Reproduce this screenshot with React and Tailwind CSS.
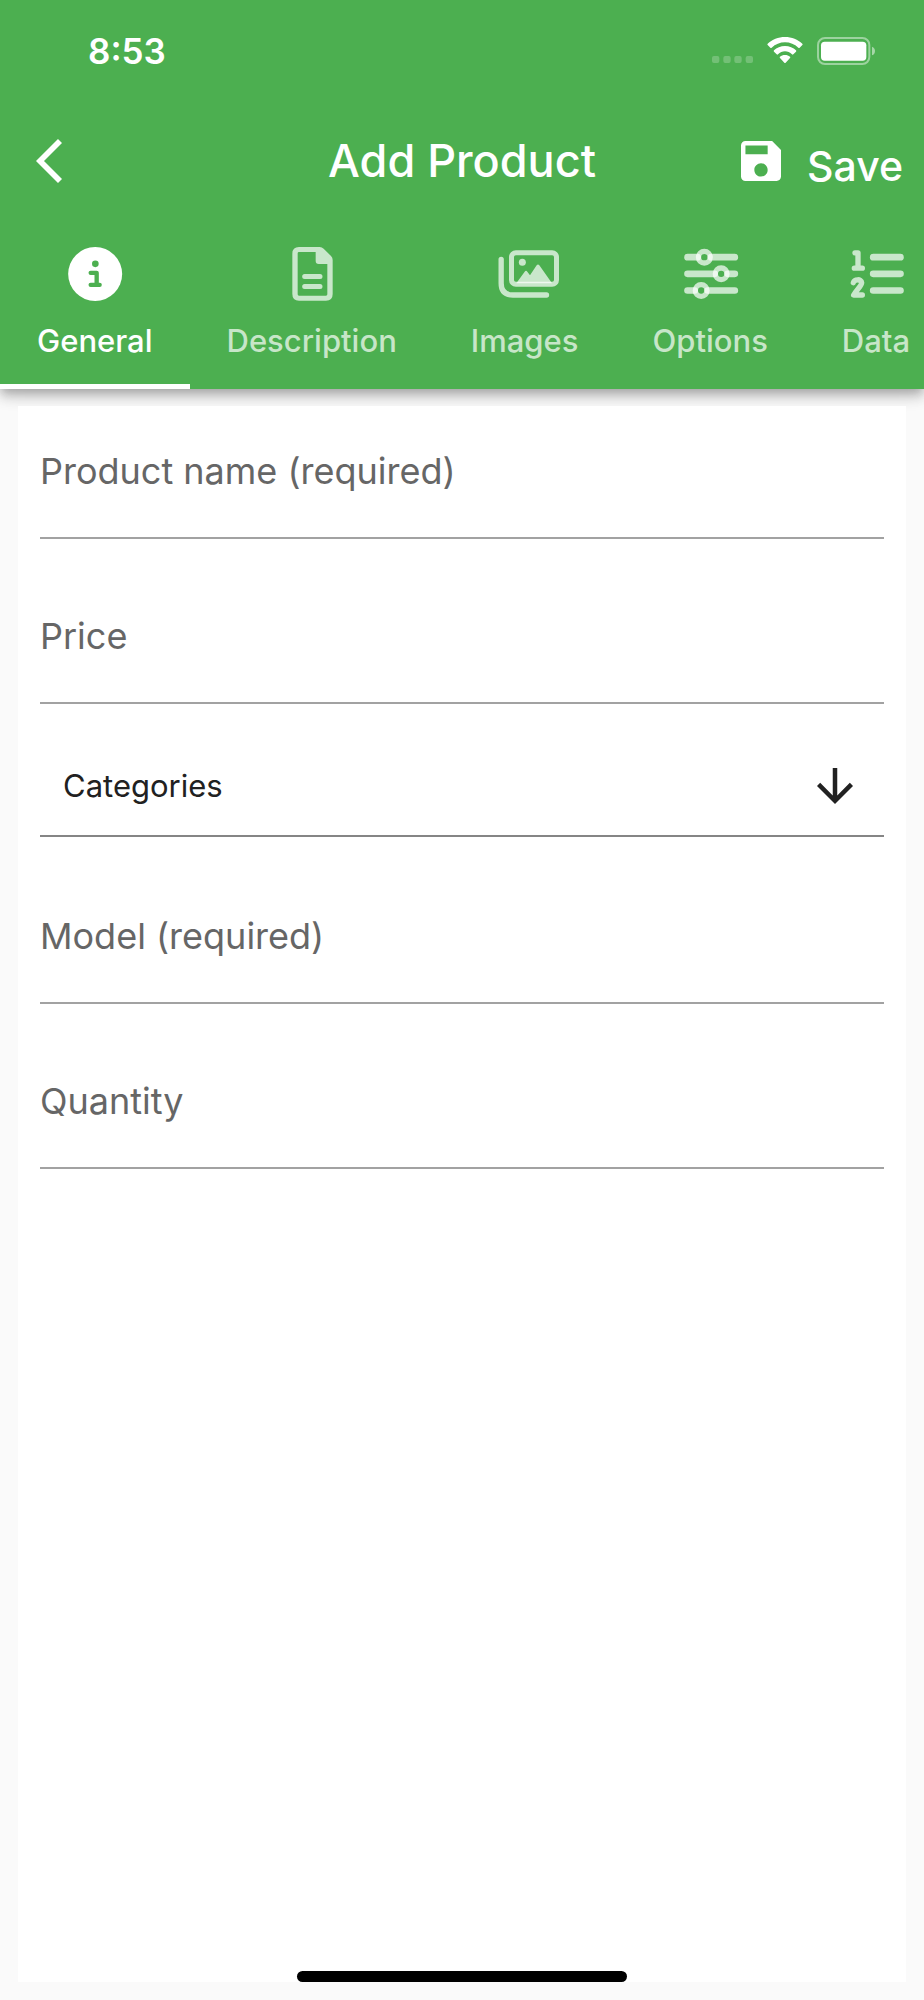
import { useState } from "react";

function BackIcon() {
  return (
    <svg viewBox="0 0 78 132" className="h-11 w-[26px]" fill="none" aria-hidden="true">
      <path d="M72 6 12 66l60 60" stroke="currentColor" strokeWidth="17" />
    </svg>
  );
}

function SaveIcon() {
  return (
    <svg viewBox="3 3 18 18" className="size-10" fill="currentColor" aria-hidden="true">
      <path d="M17 3H5a2 2 0 0 0-2 2v14a2 2 0 0 0 2 2h14c1.1 0 2-.9 2-2V7l-4-4zm-5 16c-1.660 0-3-1.340-3-3s1.340-3 3-3 3 1.340 3 3-1.340 3-3 3zm3-10H5V5h10v4z" />
    </svg>
  );
}

function WifiIcon() {
  return (
    <svg viewBox="0 0 106 78" className="h-[26px] w-9" fill="currentColor" aria-hidden="true">
      <path d="M53 0C33 0 14 8 1 20q-2 2 0 4l8 8q2 2 4 0C24 22 38 16 53 16s29 6 40 16q2 2 4 0l8-8q2-2 0-4C92 8 73 0 53 0Z" />
      <path d="M53 27c-13 0-25 5-33 13q-2 2 0 4l8 8q2 2 4 0c6-5 13-9 21-9s15 4 21 9q2 2 4 0l8-8q2-2 0-4c-8-8-20-13-33-13Z" />
      <path d="M53 54c-6 0-11 2-15 5q-2 2 0 4l13 14q2 2 4 0l13-14q2-2 0-4c-4-3-9-5-15-5Z" />
    </svg>
  );
}

function BatteryIcon() {
  return (
    <svg viewBox="0 0 177 84" className="h-7 w-[59px]" fill="currentColor" aria-hidden="true">
      <rect x="3" y="3" width="154" height="78" rx="21" fill="none" stroke="currentColor" strokeWidth="6" opacity="0.45" />
      <rect x="12" y="14" width="136" height="57" rx="11" />
      <path d="M165 29c12 4 12 22 0 26Z" opacity="0.5" />
    </svg>
  );
}

function SignalDots() {
  return (
    <svg viewBox="0 0 123 21" className="mt-[19px] h-[7px] w-[41px]" fill="currentColor" opacity="0.22" aria-hidden="true">
      <rect x="0" width="22" height="21" rx="6" />
      <rect x="34" width="22" height="21" rx="6" />
      <rect x="67" width="22" height="21" rx="6" />
      <rect x="101" width="22" height="21" rx="6" />
    </svg>
  );
}

const tabIcon = "h-[60px] w-16";

function InfoIcon() {
  return (
    <svg viewBox="188 72 192 180" className={tabIcon} aria-hidden="true">
      <circle cx="284.500" cy="162" r="81" fill="currentColor" />
      <circle cx="285" cy="131.500" r="10" fill="#4caf50" />
      <path d="M271 158.500h18v35M271 194.500h27" fill="none" stroke="#4caf50" strokeWidth="13" strokeLinecap="round" strokeLinejoin="round" />
    </svg>
  );
}

function FileIcon() {
  return (
    <svg viewBox="840 72 192 180" className={tabIcon} aria-hidden="true">
      <path
        fill="currentColor"
        fillRule="evenodd"
        d="M897 81h62q7 0 12 5l22 22q5 5 5 12v102q0 20-20 20h-81q-20 0-20-20V101q0-20 20-20Zm0 15q-4 0-4 4v123q0 4 4 4h81q4 0 4-4v-91h-26q-9 0-9-9V96Z"
      />
      <path d="M914 169.500h46M914 199.500h46" stroke="currentColor" strokeWidth="15" strokeLinecap="round" />
    </svg>
  );
}

function ImagesIcon() {
  return (
    <svg viewBox="93 72 192 180" className={`${tabIcon} overflow-visible`} aria-hidden="true">
      <rect x="148.500" y="98" width="135" height="95" rx="13" fill="none" stroke="currentColor" strokeWidth="15" />
      <path d="M117.500 118v72q0 35 35 35h101" fill="none" stroke="currentColor" strokeWidth="16" strokeLinecap="round" />
      <circle cx="181" cy="127" r="10.500" fill="currentColor" />
      <path d="M163 190l25-35q4-5 8 0l8 11 20-30q4-5 8 0l38 54Z" fill="currentColor" />
    </svg>
  );
}

function SlidersIcon() {
  return (
    <svg viewBox="647 72 192 180" className={tabIcon} fill="none" stroke="currentColor" aria-hidden="true">
      <path d="M675.500 111.500H706M746 111.500h71.500M675.500 161.500H757M796 161.500h21.500M675.500 211.500H697M736 211.500h81.500" strokeWidth="20" strokeLinecap="round" />
      <circle cx="726" cy="111.500" r="17.500" strokeWidth="16" />
      <circle cx="776.500" cy="161.500" r="17.500" strokeWidth="16" />
      <circle cx="716.500" cy="211.500" r="17.500" strokeWidth="16" />
    </svg>
  );
}

function NumberedListIcon() {
  return (
    <svg viewBox="1147 72 192 180" className={tabIcon} fill="none" stroke="currentColor" strokeLinecap="round" strokeLinejoin="round" aria-hidden="true">
      <path d="M1234.500 111.500h82M1234.500 161.500h82M1234.500 211.500h82" strokeWidth="20" />
      <path d="M1180 98.500h9v45M1178 144.500h24" strokeWidth="16" />
      <path d="M1175 188c3-11 24-12 25 0 0 9-14 20-24 37h26" strokeWidth="16" />
    </svg>
  );
}

const tabs = [
  { label: "General", Icon: InfoIcon },
  { label: "Description", Icon: FileIcon },
  { label: "Images", Icon: ImagesIcon },
  { label: "Options", Icon: SlidersIcon },
  { label: "Data", Icon: NumberedListIcon },
];

function TextField({ id, label, inputMode = "text" }) {
  return (
    <div className="flex flex-col border-b-2 border-[#a2a2a2]">
      <label htmlFor={id} className="text-[36px] leading-[40px] text-[#666666]">
        {label}
      </label>
      <input id={id} name={id} inputMode={inputMode} className="h-[46px] w-full bg-transparent text-[32px] text-[#212121] outline-none" />
    </div>
  );
}

export default function App() {
  const [active, setActive] = useState("General");

  return (
    <div className="flex min-h-screen flex-col bg-[#fafafa] font-['Inter',sans-serif]">
      <header className="bg-[#4caf50] text-white shadow-[0_4px_9px_-2px_rgba(0,0,0,0.2),0_9px_11px_0_rgba(0,0,0,0.14),0_2px_22px_0_rgba(0,0,0,0.12)]">
        <div className="flex h-[98px] items-start justify-between pt-[37px] pr-12 pl-[88px]">
          <span className="text-[35px] leading-[28px] font-semibold">8:53</span>
          <div className="flex items-start gap-[14px]">
            <SignalDots />
            <WifiIcon />
            <BatteryIcon />
          </div>
        </div>

        <div className="grid h-[126px] grid-cols-[1fr_auto_1fr] items-center px-[21px]">
          <button type="button" aria-label="Back" className="justify-self-start pl-[15px]">
            <BackIcon />
          </button>
          <h1 className="text-[45px] leading-[52px] font-medium">Add Product</h1>
          <button type="button" className="flex items-center gap-[26px] justify-self-end text-[41px] leading-[52px] font-medium">
            <SaveIcon />
            <span className="pt-2.5">Save</span>
          </button>
        </div>

        <nav role="tablist" aria-label="Product sections" className="flex overflow-hidden">
          {tabs.map(({ label, Icon }) => (
            <button
              key={label}
              type="button"
              role="tab"
              aria-selected={active === label}
              onClick={() => setActive(label)}
              className={
                active === label
                  ? "flex h-[165px] shrink-0 flex-col items-center gap-[17px] border-b-[5px] border-white px-[37px] pt-5 text-white"
                  : "flex h-[165px] shrink-0 flex-col items-center gap-[17px] border-b-[5px] border-transparent px-[37px] pt-5 text-white/70"
              }
            >
              <Icon />
              <span className="text-[31px] leading-[40px] font-medium">{label}</span>
            </button>
          ))}
        </nav>
      </header>

      <main className="relative mx-[18px] mt-[17px] mb-[18px] flex grow flex-col justify-between bg-white">
        <form className="flex flex-col px-[22px] pt-[45px]">
          <div className="flex flex-col gap-[77px]">
            <TextField id="name" label="Product name (required)" />
            <TextField id="price" label="Price" inputMode="decimal" />
          </div>

          <div className="mt-[43px] mb-[79px] grid items-center border-b-2 border-[#858585] pb-[10px] text-[#212121]">
            <select
              aria-label="Categories"
              defaultValue=""
              className="col-start-1 row-start-1 h-[78px] w-full appearance-none bg-transparent pl-[23px] text-[31px] outline-none"
            >
              <option value="">Categories</option>
            </select>
            <svg viewBox="4 4 16 16" className="pointer-events-none col-start-1 row-start-1 mr-[31px] size-9 justify-self-end" fill="currentColor" aria-hidden="true">
              <path d="M20 12l-1.410-1.410L13 16.170V4h-2v12.170l-5.580-5.590L4 12l8 8 8-8z" />
            </svg>
          </div>

          <div className="flex flex-col gap-[77px]">
            <TextField id="model" label="Model (required)" />
            <TextField id="quantity" label="Quantity" inputMode="numeric" />
          </div>
        </form>

        <div className="h-[11px] w-[330px] self-center rounded-full bg-black" />
      </main>
    </div>
  );
}
